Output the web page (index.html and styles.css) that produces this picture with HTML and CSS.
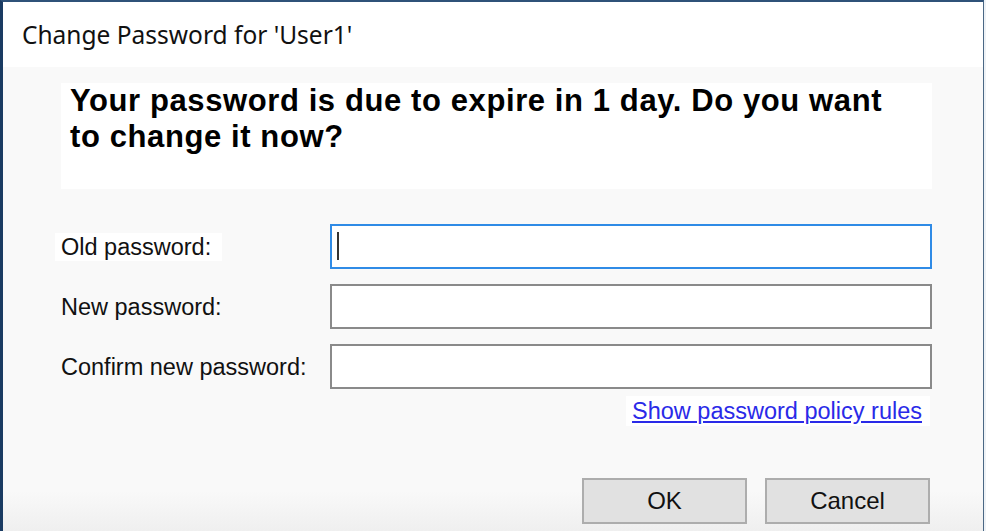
FILE: index.html
```html
<!DOCTYPE html>
<html lang="en">
<head>
    <meta charset="UTF-8">
    <meta name="viewport" content="width=device-width, initial-scale=1.0">
    <title>Change Password</title>
    <link rel="stylesheet" href="styles.css">
</head>
<body>
    <div class="window">
        <div class="title-bar">Change Password for 'User1'</div>

        <div class="content">
            <div class="message">Your password is due to expire in 1 day. Do you want to change it now?</div>

            <div class="form">
                <div class="row">
                    <div class="label-cell"><label for="oldPassword" class="label selected">Old password:</label></div>
                    <div class="field focused">
                        <input type="password" id="oldPassword">
                        <span class="caret"></span>
                    </div>
                </div>
                <div class="row">
                    <div class="label-cell"><label for="newPassword" class="label">New password:</label></div>
                    <div class="field">
                        <input type="password" id="newPassword">
                    </div>
                </div>
                <div class="row">
                    <div class="label-cell"><label for="confirmPassword" class="label">Confirm new password:</label></div>
                    <div class="field">
                        <input type="password" id="confirmPassword">
                    </div>
                </div>
            </div>

            <div class="policy">
                <a href="#" class="policy-link">Show password policy rules</a>
            </div>

            <div class="buttons">
                <button class="btn">OK</button>
                <button class="btn">Cancel</button>
            </div>
        </div>
    </div>
</body>
</html>
```
FILE: styles.css
```css
html, body {
    margin: 0;
    padding: 0;
    background-color: #eef2f6;
}
body {
    width: 986px;
    height: 531px;
    overflow: hidden;
}
.window {
    width: 980px;
    height: 529px;
    border-top: 2px solid #2f5279;
    border-left: 3px solid #1a3b62;
    border-right: 1px solid #4a6784;
    display: flex;
    flex-direction: column;
    font-family: "Liberation Sans", Arial, sans-serif;
    color: #000;
}
.title-bar {
    height: 65px;
    background-color: #ffffff;
    display: flex;
    align-items: center;
    padding-left: 19px;
    font-family: "Noto Sans", "Open Sans", sans-serif;
    font-size: 24.5px;
    color: #111;
}
.content {
    flex: 1;
    background: linear-gradient(to bottom, #f9f9f9 calc(100% - 40px), #efefef 100%);
    padding-top: 16px;
}
.message {
    margin: 0 51px 0 58px;
    height: 106px;
    box-sizing: border-box;
    padding: 0 30px 0 9px;
    background-color: #ffffff;
    font-size: 31px;
    letter-spacing: 0.6px;
    font-weight: bold;
    line-height: 36px;
}
.form {
    margin-top: 35px;
    margin-left: 52px;
    margin-right: 51px;
}
.row {
    display: flex;
    align-items: center;
    margin-bottom: 15px;
}
.row:last-child {
    margin-bottom: 0;
}
.label-cell {
    width: 275px;
}
.label {
    display: inline-block;
    padding: 0 11px 0 6px;
    font-size: 23.5px;
    line-height: 28px;
    color: #111;
}
.label.selected {
    background-color: #ffffff;
}
.field {
    flex: 1;
    position: relative;
    height: 45px;
    box-sizing: border-box;
    border: 2px solid #8a8a8a;
    background-color: #ffffff;
}
.field.focused {
    border-color: #2f8be6;
}
.field input {
    width: 100%;
    height: 100%;
    box-sizing: border-box;
    border: none;
    outline: none;
    background: transparent;
    padding: 0 6px;
    font-size: 22px;
}
.caret {
    position: absolute;
    left: 5px;
    top: 6px;
    width: 2px;
    height: 28px;
    background-color: #333;
}
.policy {
    margin: 7px 53px 0 0;
    display: flex;
    justify-content: flex-end;
}
.policy-link {
    display: inline-block;
    background-color: #ffffff;
    padding: 0 8px 0 6px;
    height: 30px;
    line-height: 30px;
    font-size: 23.5px;
    color: #2a2ae8;
}
.buttons {
    margin: 52px 53px 0 0;
    display: flex;
    justify-content: flex-end;
    gap: 18px;
}
.btn {
    width: 165px;
    height: 46px;
    background-color: #e1e1e1;
    border: 2px solid #adadad;
    font-family: "Liberation Sans", Arial, sans-serif;
    font-size: 24px;
    color: #111;
    padding: 0;
}
```
